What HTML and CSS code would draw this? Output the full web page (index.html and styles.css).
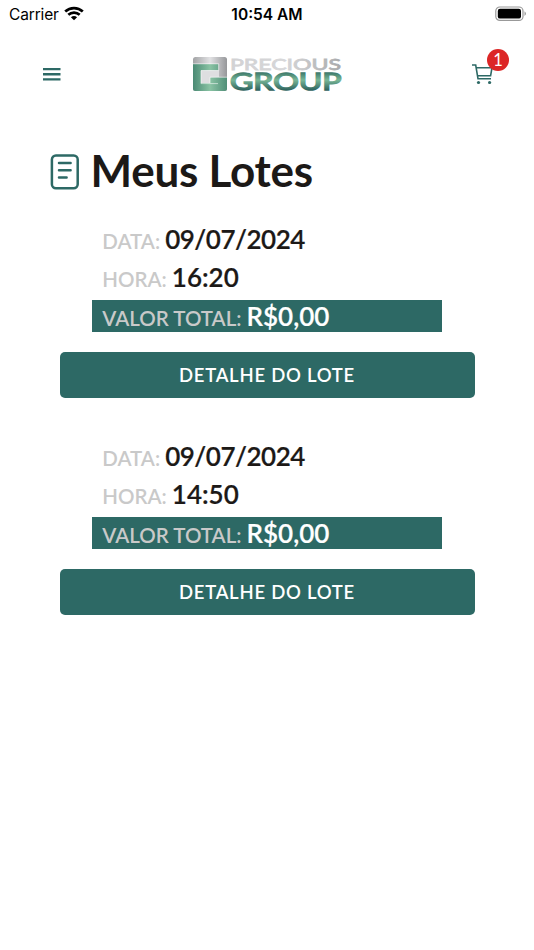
FILE: index.html
```html
<!DOCTYPE html>
<html lang="pt-BR">
<head>
<meta charset="utf-8">
<title>Meus Lotes</title>
<link rel="stylesheet" href="styles.css">
</head>
<body>
<div class="status">
  <div class="carrier"><span>Carrier</span>
    <svg width="20" height="15" viewBox="0 0 20 15" fill="none" stroke="#000" stroke-width="2.7"><path d="M1.2 5.5C6.2.9 13.8.9 18.8 5.5M4.3 8.8C7.6 5.8 12.4 5.8 15.7 8.8"/><path d="M10 14.2L6.9 11.2Q10 8.9 13.1 11.2Z" fill="#000" stroke="none"/></svg>
  </div>
  <div class="clock">10:54 AM</div>
  <svg class="battery" width="32" height="16" viewBox="0 0 32 16"><rect x=".8" y="1" width="27.2" height="13.4" rx="4" fill="none" stroke="#999" stroke-width="1.2"/><rect x="2.8" y="2.8" width="23.2" height="9.8" rx="2.2"/><path d="M29.5 5.2q3 2.4 0 4.8z" fill="#999"/></svg>
</div>
<header class="header">
  <svg class="menu" width="18" height="14" viewBox="0 0 18 14" fill="#2d6965"><path d="M0 .9h17.5v2.3H0zM0 6.1h17.5v2.3H0zM0 11.3h17.5v2.3H0z"/></svg>
  <svg class="logo" width="150" height="36" viewBox="0 0 150 36">
    <defs>
      <linearGradient id="silver" gradientUnits="userSpaceOnUse" x1="0" y1="0" x2="34" y2="0"><stop stop-color="#a2a3a5"/><stop offset=".5" stop-color="#e2e2e4"/><stop offset="1" stop-color="#96979a"/></linearGradient>
      <linearGradient id="green" gradientUnits="userSpaceOnUse" x1="0" y1="0" x2="34" y2="0"><stop stop-color="#4a8a74"/><stop offset=".5" stop-color="#8ac3a4"/><stop offset="1" stop-color="#508f78"/></linearGradient>
      <linearGradient id="grey" gradientUnits="userSpaceOnUse" x1="37" y1="0" x2="148" y2="6"><stop stop-color="#d2d2d4"/><stop offset=".5" stop-color="#d6d6d8"/><stop offset="1" stop-color="#a9aaac"/></linearGradient>
      <linearGradient id="teal" gradientUnits="userSpaceOnUse" x1="0" y1="16" x2="0" y2="35"><stop stop-color="#397467"/><stop offset=".42" stop-color="#79b797"/><stop offset="1" stop-color="#285d59"/></linearGradient>
    </defs>
    <rect x="0" y="1" width="34" height="34" rx="2.5" fill="url(#silver)"/>
    <path d="M0 8H25.5V14.5H8V27H34V32.5Q34 35 31.5 35H2.5Q0 35 0 32.5Z" fill="url(#green)"/>
    <path d="M8 14.5H26V21H17V27H8Z" fill="#dedee0"/>
    <path d="M17 21.3H34V28H17Z" fill="url(#green)"/>
    <path d="M0 7.8H25.7V14.6H8V27.6H25M17 27V21.2H34" fill="none" stroke="#fff" stroke-width=".8" opacity=".7"/>
    <text class="brand" x="37" y="13.8" font-size="16" textLength="111" lengthAdjust="spacingAndGlyphs" fill="url(#grey)" stroke="url(#grey)" stroke-width=".8">PRECIOUS</text>
    <text class="brand bold" x="37" y="33.9" font-size="23" textLength="111.5" lengthAdjust="spacingAndGlyphs" fill="url(#teal)" stroke="url(#teal)" stroke-width="1.5">GROUP</text>
  </svg>
  <div class="cart">
    <svg width="22" height="21" viewBox="0 0 22 21" fill="none" stroke="#2d6965" stroke-width="1.6"><path d="M0 1H3.7L6 14.8H19M3.9 3.7H20L18.6 11.8H5.3"/><circle cx="6.5" cy="18.5" r="1.6" fill="#2d6965" stroke="none"/><circle cx="17.6" cy="18.5" r="1.6" fill="#2d6965" stroke="none"/></svg>
    <span class="badge">1</span>
  </div>
</header>
<main>
  <div class="heading">
    <svg width="29" height="36" viewBox="0 0 29 36" fill="none" stroke="#2d6965" stroke-width="2.5" stroke-linecap="round"><rect x="1.9" y="1.5" width="25.8" height="32.8" rx="4"/><path d="M9 9H20.6M9 16.3H20.6M9 23.4H16.6"/></svg>
    <h1>Meus Lotes</h1>
  </div>
  <section class="lot">
    <div class="row"><span class="label">DATA:</span><span class="value date">09/07/2024</span></div>
    <div class="row"><span class="label">HORA:</span><span class="value">16:20</span></div>
    <div class="row total"><span class="label">VALOR TOTAL:</span><span class="value">R$0,00</span></div>
    <button>DETALHE DO LOTE</button>
  </section>
  <section class="lot">
    <div class="row"><span class="label">DATA:</span><span class="value date">09/07/2024</span></div>
    <div class="row"><span class="label">HORA:</span><span class="value">14:50</span></div>
    <div class="row total"><span class="label">VALOR TOTAL:</span><span class="value">R$0,00</span></div>
    <button>DETALHE DO LOTE</button>
  </section>
</main>
</body>
</html>
```
FILE: styles.css
```css
* { box-sizing: border-box; }
body { margin: 0; background: #fff; color: #1c1917; font-family: Lato, sans-serif; }
svg { display: block; flex: none; overflow: visible; }
.status { height: 28px; display: grid; grid-template-columns: 1fr auto 1fr; align-items: center; padding: 1px 7px 0 9px; font: 15.5px/27px Inter, sans-serif; color: #000; }
.carrier { display: flex; align-items: center; gap: 5px; letter-spacing: -.15px; }
.carrier svg { margin-top: -3px; }
.clock { font-weight: 600; margin-right: 2px; }
.battery { justify-self: end; margin-top: -2px; }
.header { height: 92px; padding: 0 40px 0 43px; display: flex; justify-content: space-between; align-items: center; }
.logo { margin-left: 132px; margin-right: auto; }
.cart { position: relative; top: .5px; }
.badge { position: absolute; left: 15px; top: -15.5px; width: 22px; height: 22px; border-radius: 50%; background: #dc2626; color: #fff; font-size: 16.5px; line-height: 22px; text-align: center; }
.heading { height: 103px; padding-left: 50px; display: flex; align-items: center; gap: 11.5px; }
h1 { margin: -3px 0 0; font-size: 44px; line-height: 52px; font-weight: 700; letter-spacing: -.25px; }
.lot { width: 415px; height: 216.8px; margin: 0 0 0 59.5px; display: flex; flex-direction: column; }
.row { height: 38.4px; margin: 0 32.3px; padding-left: 10.5px; display: flex; align-items: flex-start; gap: 5px; white-space: nowrap; font-weight: 600; }
.label { color: #c9c9c9; font-size: 20.5px; line-height: 37.5px; }
.value { font-size: 26px; line-height: 32px; -webkit-text-stroke: .2px currentColor; }
.date { letter-spacing: -.48px; }
.total { height: 32.3px; flex: none; background: #2d6965; margin-bottom: 20.3px; color: #fff; }
button { height: 45.5px; flex: none; border: 0; border-radius: 5px; background: #2d6965; color: #fff; font: 600 18.5px/46px Lato, sans-serif; letter-spacing: .75px; padding: 0; }
```
